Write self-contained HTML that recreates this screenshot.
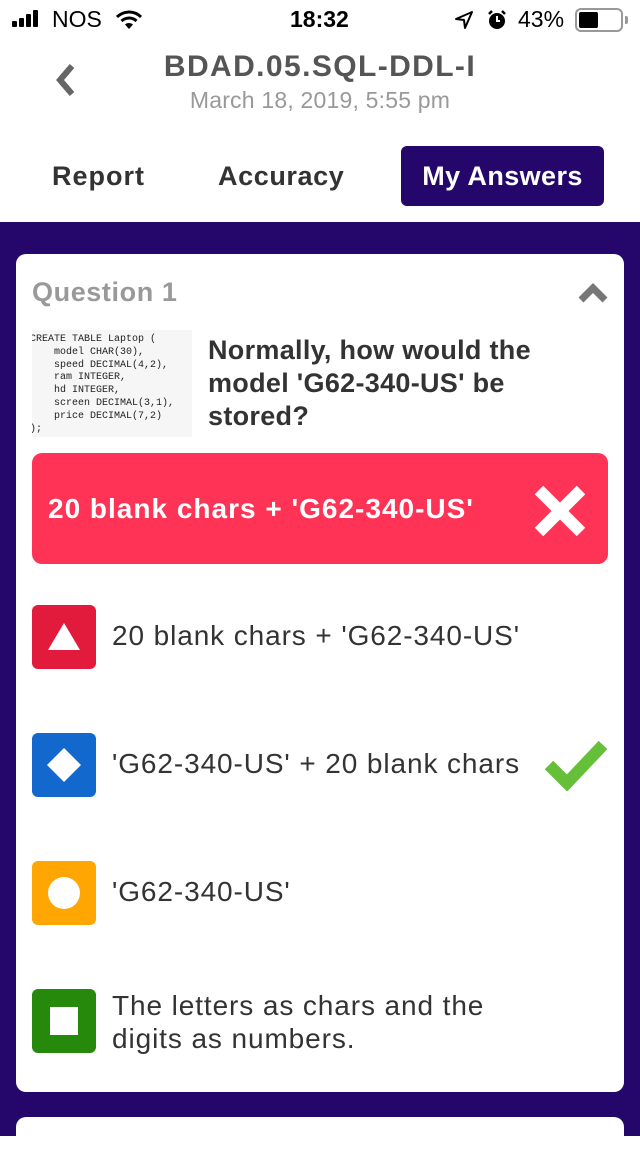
<!DOCTYPE html>
<html><head><meta charset="utf-8"><style>
*{margin:0;padding:0;box-sizing:border-box}
body{width:640px;height:1136px;overflow:hidden;background:#fff;font-family:"Liberation Sans",sans-serif;position:relative}
.a{position:absolute}
.status{font-size:23px;color:#000}
.purple{left:0;top:222px;width:640px;height:914px;background:#25076b}
.card{left:16px;top:254px;width:608px;height:838px;background:#fff;border-radius:10px}
.card2{left:16px;top:1117px;width:608px;height:40px;background:#fff;border-radius:10px}
.ic{width:64px;height:64px;border-radius:6px}
.opt{font-size:28px;color:#333;left:112px;letter-spacing:0.9px}
pre{font-family:"Liberation Mono",monospace;font-size:10px;line-height:12.8px;color:#222}
</style></head><body>
<div class="a status" style="left:12px;top:6px;">
<svg width="36" height="18" style="vertical-align:-1px"><rect x="0" y="11" width="5" height="6" rx="1"/><rect x="7" y="8" width="5" height="9" rx="1"/><rect x="14" y="4" width="5" height="13" rx="1"/><rect x="21" y="0" width="5" height="17" rx="1"/></svg></div>
<div class="a status" style="left:52px;top:6px;">NOS</div>
<svg class="a" style="left:116px;top:10px" width="26" height="20" viewBox="0 0 26 20"><path d="M1 7 A17 17 0 0 1 25 7" stroke="#000" stroke-width="3" fill="none"/><path d="M5.5 11 A11 11 0 0 1 20.5 11" stroke="#000" stroke-width="3" fill="none"/><path d="M13 19 L9 14.5 A6 6 0 0 1 17 14.5Z" fill="#000"/></svg>
<div class="a status" style="left:290px;top:6px;font-weight:bold">18:32</div>
<svg class="a" style="left:454px;top:10px" width="20" height="20"><path d="M18 2 L2 9 L10 10 L11 18 Z" fill="none" stroke="#000" stroke-width="2" stroke-linejoin="round"/></svg>
<svg class="a" style="left:486px;top:9px" width="22" height="22"><circle cx="11" cy="12" r="8" fill="#000"/><path d="M11 7v5h3" stroke="#fff" stroke-width="2" fill="none"/><path d="M3 5l3-3M19 5l-3-3" stroke="#000" stroke-width="2.5"/></svg>
<div class="a status" style="left:518px;top:6px;">43%</div>
<div class="a" style="left:575px;top:8px;width:48px;height:24px;border:2px solid #999;border-radius:6px"><div style="margin:2px;width:19px;height:16px;background:#000;border-radius:2px"></div></div>
<div class="a" style="left:625px;top:16px;width:3px;height:8px;background:#999;border-radius:0 2px 2px 0"></div>
<svg class="a" style="left:52px;top:62px" width="26" height="36"><path d="M20 4 L8 18 L20 32" stroke="#666" stroke-width="6" fill="none"/></svg>
<div class="a" style="left:0;width:640px;text-align:center;top:50px;font-size:30px;font-weight:bold;color:#555;letter-spacing:1.4px">BDAD.05.SQL-DDL-I</div>
<div class="a" style="left:0;width:640px;text-align:center;top:87px;font-size:23px;color:#999;letter-spacing:0.2px">March 18, 2019, 5:55 pm</div>
<div class="a" style="left:52px;top:161px;font-size:27px;font-weight:bold;color:#333;letter-spacing:1px">Report</div>
<div class="a" style="left:218px;top:161px;font-size:27px;font-weight:bold;color:#333;letter-spacing:0.6px">Accuracy</div>
<div class="a" style="left:401px;top:146px;width:203px;height:60px;background:#25076b;border-radius:6px;color:#fff;font-size:27px;font-weight:bold;text-align:center;line-height:60px;letter-spacing:0.4px">My Answers</div>
<div class="a purple"></div>
<div class="a card"></div>
<div class="a card2"></div>
<div class="a" style="left:32px;top:277px;font-size:27px;font-weight:bold;color:#999;letter-spacing:0.6px">Question 1</div>
<svg class="a" style="left:578px;top:282px" width="30" height="22"><path d="M3 18 L15 6 L27 18" stroke="#777" stroke-width="7" fill="none"/></svg>
<div class="a" style="left:32px;top:330px;width:160px;height:107px;background:#f6f6f6;overflow:hidden"><pre style="margin:4px 0 0 -2px">CREATE TABLE Laptop (
    model CHAR(30),
    speed DECIMAL(4,2),
    ram INTEGER,
    hd INTEGER,
    screen DECIMAL(3,1),
    price DECIMAL(7,2)
);</pre></div>
<div class="a" style="left:208px;top:334px;width:380px;font-size:27px;line-height:33px;font-weight:bold;color:#333;letter-spacing:0.3px">Normally, how would the model 'G62-340-US' be stored?</div>
<div class="a" style="left:32px;top:453px;width:576px;height:111px;background:#ff3355;border-radius:10px"></div>
<div class="a" style="left:48px;top:493px;font-size:28px;font-weight:bold;color:#fff;letter-spacing:1px">20 blank chars + 'G62-340-US'</div>
<svg class="a" style="left:533px;top:484px" width="54" height="54"><path d="M6 6 L48 48 M48 6 L6 48" stroke="#fff" stroke-width="12"/></svg>
<div class="a ic" style="left:32px;top:605px;background:#e21b3c"><svg width="64" height="64"><path d="M32 18 L48 45 L16 45Z" fill="#fff"/></svg></div>
<div class="a opt" style="top:620px">20 blank chars + 'G62-340-US'</div>
<div class="a ic" style="left:32px;top:733px;background:#1368ce"><svg width="64" height="64"><path d="M32 15 L49 32 L32 49 L15 32Z" fill="#fff"/></svg></div>
<div class="a opt" style="top:748px">'G62-340-US' + 20 blank chars</div>
<svg class="a" style="left:543px;top:735px" width="66" height="56"><path d="M6 30 L24 48 L60 10" stroke="#66bf39" stroke-width="12" fill="none"/></svg>
<div class="a ic" style="left:32px;top:861px;background:#ffa602"><svg width="64" height="64"><circle cx="32" cy="32" r="16" fill="#fff"/></svg></div>
<div class="a opt" style="top:876px">'G62-340-US'</div>
<div class="a ic" style="left:32px;top:989px;background:#26890c"><svg width="64" height="64"><rect x="18" y="18" width="28" height="28" fill="#fff"/></svg></div>
<div class="a opt" style="top:989px;line-height:33px;width:400px">The letters as chars and the digits as numbers.</div>
</body></html>
